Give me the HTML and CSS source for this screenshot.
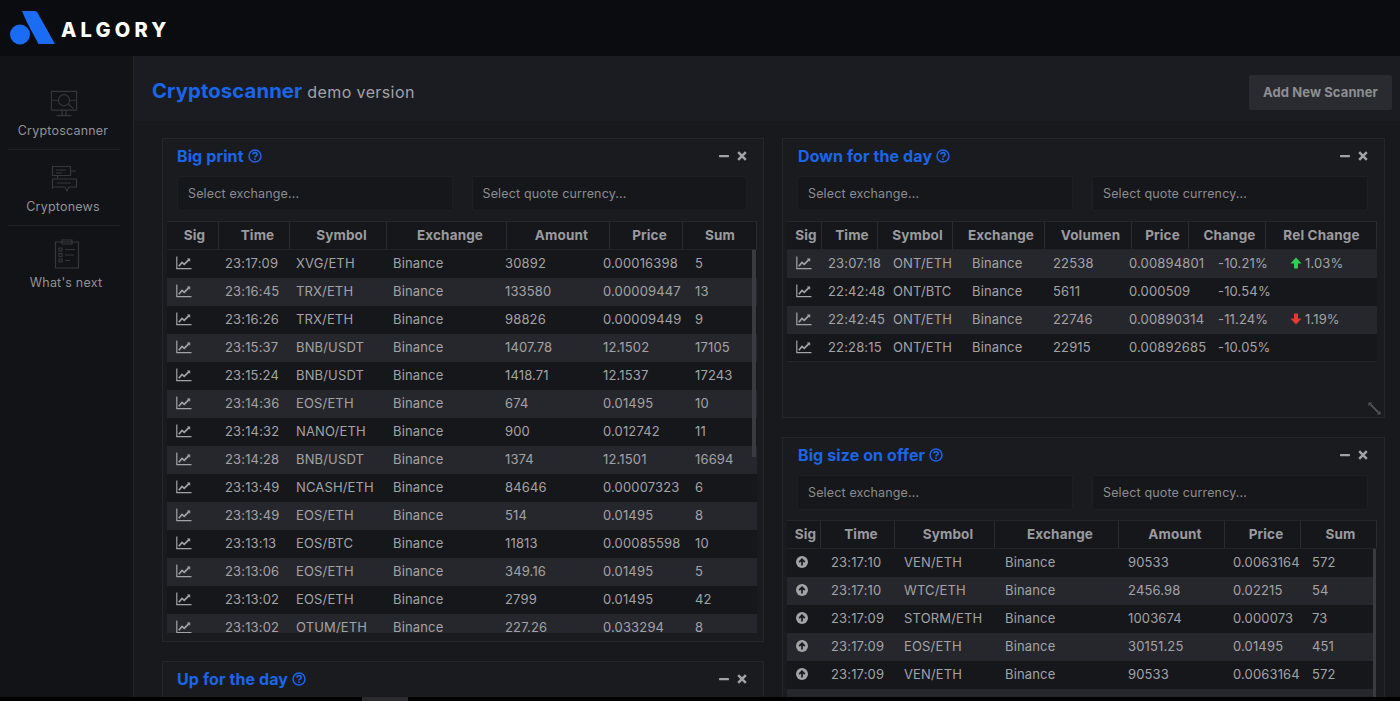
FILE: index.html
```html
<!DOCTYPE html>
<html lang="en">
<head>
<meta charset="utf-8">
<title>Algory Cryptoscanner</title>
<link rel="stylesheet" href="styles.css">
</head>
<body>
<svg class="defs" width="0" height="0" aria-hidden="true">
  <symbol id="chart" viewBox="0 0 16 14"><path d="M.8 .5V12.7H15.5" fill="none" stroke="currentColor" stroke-width="1.2"/><path d="M2.8 10.2 6 6.4 8.2 8.4 13.2 3.3" fill="none" stroke="currentColor" stroke-width="1.7"/><path d="M10.8 2.4H14.2V5.8Z" fill="currentColor"/></symbol>
  <symbol id="circup" viewBox="0 0 12 12"><circle cx="6" cy="6" r="6" fill="currentColor"/><path d="M6 9.4V3.4M3.2 6.1 6 3.2 8.8 6.1" fill="none" stroke="#17181c" stroke-width="1.7"/></symbol>
  <symbol id="help" viewBox="0 0 14 14"><circle cx="7" cy="7" r="6" fill="none" stroke="currentColor" stroke-width="1.5"/><path d="M4.9 5.5C5 3 9.2 3 9.2 5.4 9.2 7 7 6.8 7 8.4" fill="none" stroke="currentColor" stroke-width="1.6"/><rect x="6.2" y="9.3" width="1.6" height="1.6" fill="currentColor"/></symbol>
  <symbol id="minus" viewBox="0 0 10 10"><rect x="0" y="4" width="10" height="2.2" rx=".6" fill="currentColor"/></symbol>
  <symbol id="close" viewBox="0 0 10 10"><path d="M1.2 1.2 8.8 8.8M8.8 1.2 1.2 8.8" stroke="currentColor" stroke-width="2.5" fill="none"/></symbol>
</svg>

<header class="topbar">
  <svg class="logo-mark" viewBox="0 0 48 36" aria-hidden="true"><circle cx="11" cy="23.5" r="10" fill="#1a6cf5"/><path d="M13 0H25.500C27 0 28 .8 28.800 2.200L46 33H29.500L17.500 10.500Z" fill="#1a6cf5"/></svg>
  <span class="logo-text">ALGORY</span>
</header>

<div class="shell">
  <nav class="sidebar">
    <a class="nav-item">
      <svg class="nav-icon nav-icon-a" viewBox="0 0 30 30" aria-hidden="true"><path d="M1.500 1.500H28.500V21.500H1.500ZM10 27H20M13 21.500V27M17 21.500V27M7 27.500H23"/><circle cx="15" cy="11" r="6"/><path d="M19.500 15 25 20M2 11H9M21 11H28"/></svg>
      <span>Cryptoscanner</span>
    </a>
    <a class="nav-item">
      <svg class="nav-icon nav-icon-b" viewBox="0 0 28 28" aria-hidden="true"><path d="M2.500 1.500H20.500V10.500H2.500ZM6 5H16M6 8H12M20.500 6H26M7.500 10.500V14M2.500 14H26.500V22H19L17 26 15 22H2.500ZM7 18H21M2.500 22V24"/></svg>
      <span>Cryptonews</span>
    </a>
    <a class="nav-item nav-item-last">
      <svg class="nav-icon nav-icon-c" viewBox="0 0 26 30" aria-hidden="true"><path d="M1.500 3H24.500V29H1.500ZM8 1H18V5H8ZM5 9H8V12H5ZM5 14.500H8V17.500H5ZM5 20H8V23H5ZM11 10.500H21M11 16H20M11 21.500H16" /></svg>
      <span>What's next</span>
    </a>
  </nav>

  <main class="main">
    <div class="titlebar">
      <h1 class="page-title">Cryptoscanner <small>demo version</small></h1>
      <button class="add-btn">Add New Scanner</button>
    </div>

    <div class="board">
      <div class="col col-left">
        <section class="panel panel-big">
          <div class="panel-head">
            <h2>Big print <svg class="ico-help"><use href="#help"/></svg></h2>
            <div class="tools"><svg class="ico-tool"><use href="#minus"/></svg><svg class="ico-tool"><use href="#close"/></svg></div>
          </div>
          <div class="filters"><div class="select">Select exchange...</div><div class="select">Select quote currency...</div></div>
          <div class="table t-big">
            <div class="thead"><div>Sig</div><div>Time</div><div>Symbol</div><div>Exchange</div><div>Amount</div><div>Price</div><div>Sum</div></div>
            <div class="tbody stripe-even">
              <div class="tr"><svg class="ico-chart"><use href="#chart"/></svg><div>23:17:09</div><div>XVG/ETH</div><div>Binance</div><div>30892</div><div>0.00016398</div><div>5</div></div>
              <div class="tr"><svg class="ico-chart"><use href="#chart"/></svg><div>23:16:45</div><div>TRX/ETH</div><div>Binance</div><div>133580</div><div>0.00009447</div><div>13</div></div>
              <div class="tr"><svg class="ico-chart"><use href="#chart"/></svg><div>23:16:26</div><div>TRX/ETH</div><div>Binance</div><div>98826</div><div>0.00009449</div><div>9</div></div>
              <div class="tr"><svg class="ico-chart"><use href="#chart"/></svg><div>23:15:37</div><div>BNB/USDT</div><div>Binance</div><div>1407.78</div><div>12.1502</div><div>17105</div></div>
              <div class="tr"><svg class="ico-chart"><use href="#chart"/></svg><div>23:15:24</div><div>BNB/USDT</div><div>Binance</div><div>1418.71</div><div>12.1537</div><div>17243</div></div>
              <div class="tr"><svg class="ico-chart"><use href="#chart"/></svg><div>23:14:36</div><div>EOS/ETH</div><div>Binance</div><div>674</div><div>0.01495</div><div>10</div></div>
              <div class="tr"><svg class="ico-chart"><use href="#chart"/></svg><div>23:14:32</div><div>NANO/ETH</div><div>Binance</div><div>900</div><div>0.012742</div><div>11</div></div>
              <div class="tr"><svg class="ico-chart"><use href="#chart"/></svg><div>23:14:28</div><div>BNB/USDT</div><div>Binance</div><div>1374</div><div>12.1501</div><div>16694</div></div>
              <div class="tr"><svg class="ico-chart"><use href="#chart"/></svg><div>23:13:49</div><div>NCASH/ETH</div><div>Binance</div><div>84646</div><div>0.00007323</div><div>6</div></div>
              <div class="tr"><svg class="ico-chart"><use href="#chart"/></svg><div>23:13:49</div><div>EOS/ETH</div><div>Binance</div><div>514</div><div>0.01495</div><div>8</div></div>
              <div class="tr"><svg class="ico-chart"><use href="#chart"/></svg><div>23:13:13</div><div>EOS/BTC</div><div>Binance</div><div>11813</div><div>0.00085598</div><div>10</div></div>
              <div class="tr"><svg class="ico-chart"><use href="#chart"/></svg><div>23:13:06</div><div>EOS/ETH</div><div>Binance</div><div>349.16</div><div>0.01495</div><div>5</div></div>
              <div class="tr"><svg class="ico-chart"><use href="#chart"/></svg><div>23:13:02</div><div>EOS/ETH</div><div>Binance</div><div>2799</div><div>0.01495</div><div>42</div></div>
              <div class="tr"><svg class="ico-chart"><use href="#chart"/></svg><div>23:13:02</div><div>OTUM/ETH</div><div>Binance</div><div>227.26</div><div>0.033294</div><div>8</div></div>
              <div class="scroll-thumb thumb-big"></div>
            </div>
          </div>
        </section>
        <section class="panel panel-up">
          <div class="panel-head">
            <h2>Up for the day <svg class="ico-help"><use href="#help"/></svg></h2>
            <div class="tools"><svg class="ico-tool"><use href="#minus"/></svg><svg class="ico-tool"><use href="#close"/></svg></div>
          </div>
        </section>
      </div>

      <div class="col col-right">
        <section class="panel panel-down">
          <div class="panel-head">
            <h2>Down for the day <svg class="ico-help"><use href="#help"/></svg></h2>
            <div class="tools"><svg class="ico-tool"><use href="#minus"/></svg><svg class="ico-tool"><use href="#close"/></svg></div>
          </div>
          <div class="filters"><div class="select">Select exchange...</div><div class="select">Select quote currency...</div></div>
          <div class="table t-down">
            <div class="thead"><div>Sig</div><div>Time</div><div>Symbol</div><div>Exchange</div><div>Volumen</div><div>Price</div><div>Change</div><div>Rel Change</div></div>
            <div class="tbody stripe-odd">
              <div class="tr"><svg class="ico-chart"><use href="#chart"/></svg><div>23:07:18</div><div>ONT/ETH</div><div>Binance</div><div>22538</div><div>0.00894801</div><div>-10.21%</div><div class="rel"><svg class="arrow up" viewBox="0 0 12 12"><path d="M6 .5 11.500 6.500H8V11.500H4V6.500H.5Z"/></svg>1.03%</div></div>
              <div class="tr"><svg class="ico-chart"><use href="#chart"/></svg><div>22:42:48</div><div>ONT/BTC</div><div>Binance</div><div>5611</div><div>0.000509</div><div>-10.54%</div><div></div></div>
              <div class="tr"><svg class="ico-chart"><use href="#chart"/></svg><div>22:42:45</div><div>ONT/ETH</div><div>Binance</div><div>22746</div><div>0.00890314</div><div>-11.24%</div><div class="rel"><svg class="arrow down" viewBox="0 0 12 12"><path d="M6 11.500 .5 5.500H4V.5H8V5.500H11.500Z"/></svg>1.19%</div></div>
              <div class="tr"><svg class="ico-chart"><use href="#chart"/></svg><div>22:28:15</div><div>ONT/ETH</div><div>Binance</div><div>22915</div><div>0.00892685</div><div>-10.05%</div><div></div></div>
            </div>
          </div>
          <svg class="resize" viewBox="0 0 12 12" aria-hidden="true"><path d="M2.500 2.500 9.500 9.500" stroke-width="1.600"/><path d="M.5 4V.5H4ZM11.500 8V11.500H8Z" fill="currentColor" stroke="none"/></svg>
        </section>
        <section class="panel panel-size">
          <div class="panel-head">
            <h2>Big size on offer <svg class="ico-help"><use href="#help"/></svg></h2>
            <div class="tools"><svg class="ico-tool"><use href="#minus"/></svg><svg class="ico-tool"><use href="#close"/></svg></div>
          </div>
          <div class="filters"><div class="select">Select exchange...</div><div class="select">Select quote currency...</div></div>
          <div class="table t-size">
            <div class="thead"><div>Sig</div><div>Time</div><div>Symbol</div><div>Exchange</div><div>Amount</div><div>Price</div><div>Sum</div></div>
            <div class="tbody stripe-even">
              <div class="tr"><svg class="ico-circ"><use href="#circup"/></svg><div>23:17:10</div><div>VEN/ETH</div><div>Binance</div><div>90533</div><div>0.0063164</div><div>572</div></div>
              <div class="tr"><svg class="ico-circ"><use href="#circup"/></svg><div>23:17:10</div><div>WTC/ETH</div><div>Binance</div><div>2456.98</div><div>0.02215</div><div>54</div></div>
              <div class="tr"><svg class="ico-circ"><use href="#circup"/></svg><div>23:17:09</div><div>STORM/ETH</div><div>Binance</div><div>1003674</div><div>0.000073</div><div>73</div></div>
              <div class="tr"><svg class="ico-circ"><use href="#circup"/></svg><div>23:17:09</div><div>EOS/ETH</div><div>Binance</div><div>30151.25</div><div>0.01495</div><div>451</div></div>
              <div class="tr"><svg class="ico-circ"><use href="#circup"/></svg><div>23:17:09</div><div>VEN/ETH</div><div>Binance</div><div>90533</div><div>0.0063164</div><div>572</div></div>
              <div class="tr tr-empty"></div>
              <div class="scroll-thumb thumb-size"></div>
            </div>
          </div>
        </section>
      </div>
    </div>
  </main>
</div>
<div class="page-scroll"><div class="page-thumb"></div></div>
</body>
</html>
```
FILE: styles.css
```css
* { box-sizing: border-box; }
html, body { margin: 0; height: 701px; overflow: hidden; }
body {
  display: flex;
  flex-direction: column;
  background: #000;
  color: #a3a3a6;
  font-family: Inter, "Noto Sans", sans-serif;
  font-size: 13px;
  letter-spacing: .15px;
}
.defs { display: block; height: 0; }

.topbar {
  flex: 0 0 56px;
  display: flex;
  align-items: center;
  padding-left: 9px;
  background: #0b0c10;
}
.logo-mark { width: 48px; height: 36px; margin-top: 1px; }
.logo-text {
  margin-left: 4px;
  margin-top: 3px;
  color: #fff;
  font-size: 20px;
  font-weight: 800;
  letter-spacing: 4.2px;
}

.shell { flex: 1; display: flex; min-height: 0; }
.sidebar {
  flex: 0 0 134px;
  padding: 30px 13px 0 8px;
  background: #121317;
  border-right: 1px solid #24252a;
}
.nav-item {
  display: flex;
  flex-direction: column;
  align-items: center;
  justify-content: flex-end;
  height: 64px;
  padding-bottom: 10px;
  border-bottom: 1px solid #202126;
  color: #929296;
  font-size: 12.500px;
  letter-spacing: .2px;
  line-height: 16px;
}
.nav-item span { margin-right: 2px; }
.nav-item + .nav-item { height: 75.5px; }
.nav-item-last { border-bottom: 0; padding-left: 6px; }
.nav-icon { fill: none; stroke: #36373c; stroke-width: 1.2; margin-bottom: 5px; }
.nav-icon-a { width: 28px; height: 28px; }
.nav-icon-b { width: 28px; height: 28px; margin-bottom: 6px; }
.nav-icon-c { width: 26px; height: 30px; margin-bottom: 6px; }

.main { flex: 1; min-width: 0; display: flex; flex-direction: column; background: #18191d; }
.titlebar {
  flex: 0 0 65px;
  display: flex;
  align-items: center;
  justify-content: space-between;
  padding: 7px 8px 0 18px;
  background: #1b1c21;
}
.page-title {
  margin: 0 0 4px;
  color: #1a66ea;
  font-size: 20.300px;
  font-weight: 700;
  letter-spacing: .1px;
}
.page-title small { color: #a3a3a6; font-size: 16px; font-weight: 400; letter-spacing: .4px; }
.add-btn {
  width: 143px;
  height: 35px;
  padding: 0;
  border: 0;
  border-radius: 2px;
  background: #2a2b30;
  color: #8e8e93;
  font: 700 13px Inter, sans-serif;
  letter-spacing: .1px;
}

.board {
  flex: 1;
  min-height: 0;
  display: grid;
  grid-template-columns: 602px 603px;
  column-gap: 18px;
  padding: 17px 0 0 28px;
  overflow: hidden;
}
.col { display: flex; flex-direction: column; gap: 19px; }
.panel {
  position: relative;
  flex: none;
  background: #1a1b1f;
  border: 1px solid #25262b;
}
.panel-big { height: 504px; }
.panel-up { height: 60px; border-bottom: 0; }
.panel-down { height: 280px; }
.panel-size { height: 270px; }

.panel-head {
  display: flex;
  align-items: center;
  justify-content: space-between;
  height: 37px;
  padding: 0 16px 3px 14px;
}
.col-right .panel-head { padding-left: 15px; }
.panel-head h2 {
  display: flex;
  align-items: center;
  gap: 4px;
  margin: 0;
  color: #1a66ea;
  font-size: 16px;
  font-weight: 700;
  letter-spacing: .1px;
}
.ico-help { width: 14px; height: 14px; }
.tools { display: flex; gap: 8px; color: #a3a3a6; }
.ico-tool { width: 10px; height: 10px; }

.filters { display: flex; gap: 19px; padding: 0 16px 0 14px; }
.select {
  flex: 1;
  height: 35px;
  padding: 0 10px;
  background: #16171b;
  border: 1px solid #1e1f23;
  border-radius: 2px;
  color: #8c8c90;
  font-size: 12.500px;
  line-height: 33px;
}

.table { margin: 10px 0 0 4px; }
.thead {
  display: grid;
  height: 29px;
  align-items: stretch;
  border-top: 1px solid #25262b;
  border-bottom: 1px solid #222327;
  background: #16171b;
  color: #9b9b9f;
  font-weight: 700;
  font-size: 13.500px;
  text-align: center;
}
.thead > div { padding-left: 7px; line-height: 27px; border-right: 1px solid #2a2b30; }
.thead > div:first-child { padding-left: 4px; }
.thead > div:last-child { padding-left: 1px; }
.t-down .thead > div { padding-left: 5px; }
.t-down .thead > div:first-child { padding-left: 4px; }
.t-down .thead > div:last-child { padding-left: 1px; }
.t-size .thead > div:last-child { padding-left: 4px; }
.tbody { position: relative; overflow: hidden; }
.tr { display: grid; height: 28px; padding-bottom: 2px; align-items: center; white-space: nowrap; background: #16171b; }
.stripe-even .tr:nth-child(even), .stripe-odd .tr:nth-child(odd) { background: #26272c; }
.scroll-thumb { position: absolute; top: 0; background: #3a3b40; }

.ico-chart { width: 16px; height: 14px; margin-left: 9px; color: #a3a3a6; }
.ico-circ { width: 12px; height: 12px; margin-left: 9px; color: #a3a3a6; }

.t-big { width: 590px; }
.t-big .thead { grid-template-columns: 52px 71px 97px 120px 103px 73px 74px; }
.t-big .tbody { height: 383px; }
.t-big .tr { grid-template-columns: 58px 71px 97px 112px 98px 92px 62px; }
.thumb-big { right: 1px; width: 4px; height: 207px; }

.t-down { width: 590px; }
.t-down .thead { grid-template-columns: 35px 56px 75px 92px 87px 57px 77px 111px; }
.t-down .tbody { height: 112px; border-bottom: 1px solid #25262b; }
.t-down .tr { grid-template-columns: 41px 65px 79px 81px 76px 89px 72px 87px; }
.rel { display: flex; align-items: center; gap: 3px; }
.arrow { width: 12px; height: 12px; }
.arrow.up { fill: #2fcf55; }
.arrow.down { fill: #e53935; }
.resize { position: absolute; right: 3px; bottom: 2px; width: 13px; height: 13px; color: #56575b; stroke: currentColor; fill: none; }

.t-size { width: 590px; }
.t-size .thead { grid-template-columns: 34px 74px 100px 124px 106px 76px 76px; }
.t-size .tbody { height: 160px; }
.t-size .tr { width: 588px; grid-template-columns: 44px 73px 101px 123px 105px 79px 63px; }
.tr-empty { display: block; }
.thumb-size { right: 1px; width: 3px; height: 160px; }

.page-scroll { flex: 0 0 4px; background: #000; padding-left: 362px; }
.page-thumb { width: 46px; height: 4px; background: #2a2a2c; }
```
